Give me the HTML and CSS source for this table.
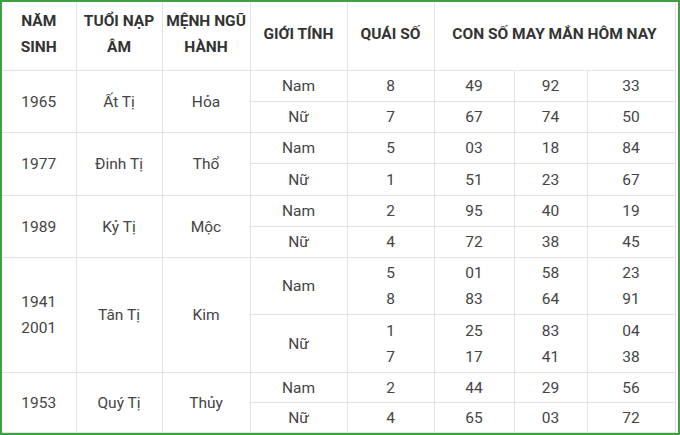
FILE: index.html
```html
<!DOCTYPE html>
<html lang="vi">
<head>
<meta charset="utf-8">
<title>Con số may mắn</title>
<link rel="stylesheet" href="styles.css">
</head>
<body>
<div class="frame">
<table class="lucky">
<colgroup>
<col class="c1"><col class="c2"><col class="c3"><col class="c4"><col class="c5"><col class="c6"><col class="c7"><col class="c8">
</colgroup>
<thead>
<tr class="head">
<th>NĂM<br>SINH</th>
<th>TUỔI NẠP<br>ÂM</th>
<th>MỆNH NGŨ<br>HÀNH</th>
<th>GIỚI TÍNH</th>
<th>QUÁI SỐ</th>
<th colspan="3">CON SỐ MAY MẮN HÔM NAY</th>
</tr>
</thead>
<tbody>
<tr class="r31"><td rowspan="2">1965</td><td rowspan="2">Ất Tị</td><td rowspan="2">Hỏa</td><td>Nam</td><td>8</td><td>49</td><td>92</td><td>33</td></tr>
<tr class="r31"><td>Nữ</td><td>7</td><td>67</td><td>74</td><td>50</td></tr>
<tr class="r31"><td rowspan="2">1977</td><td rowspan="2">Đinh Tị</td><td rowspan="2">Thổ</td><td>Nam</td><td>5</td><td>03</td><td>18</td><td>84</td></tr>
<tr class="r32"><td>Nữ</td><td>1</td><td>51</td><td>23</td><td>67</td></tr>
<tr class="r31"><td rowspan="2">1989</td><td rowspan="2">Kỷ Tị</td><td rowspan="2">Mộc</td><td>Nam</td><td>2</td><td>95</td><td>40</td><td>19</td></tr>
<tr class="r31"><td>Nữ</td><td>4</td><td>72</td><td>38</td><td>45</td></tr>
<tr class="r57"><td rowspan="2">1941<br>2001</td><td rowspan="2">Tân Tị</td><td rowspan="2">Kim</td><td>Nam</td><td>5<br>8</td><td>01<br>83</td><td>58<br>64</td><td>23<br>91</td></tr>
<tr class="r58"><td>Nữ</td><td>1<br>7</td><td>25<br>17</td><td>83<br>41</td><td>04<br>38</td></tr>
<tr class="r30"><td rowspan="2">1953</td><td rowspan="2">Quý Tị</td><td rowspan="2">Thủy</td><td>Nam</td><td>2</td><td>44</td><td>29</td><td>56</td></tr>
<tr class="r30"><td>Nữ</td><td>4</td><td>65</td><td>03</td><td>72</td></tr>
</tbody>
</table>
</div>
</body>
</html>
```

FILE: styles.css
```css
html, body {
  margin: 0;
  padding: 0;
  background: #ffffff;
}
.frame {
  width: 680px;
  height: 435px;
  box-sizing: border-box;
  border: 2px solid #3da23d;
  overflow: hidden;
  background: #fff;
}
.lucky {
  border-collapse: collapse;
  table-layout: fixed;
  width: 673px;
  font-family: Roboto, "Noto Sans", Arial, sans-serif;
  font-size: 15.5px;
  color: #444;
  margin-top: -1px;
}
.c1 { width: 74px; }
.c2 { width: 86px; }
.c3 { width: 88px; }
.c4 { width: 97px; }
.c5 { width: 87px; }
.c6 { width: 80px; }
.c7 { width: 73px; }
.c8 { width: 88px; }
.lucky th, .lucky td {
  border: 1px solid #e3e3e3;
  text-align: center;
  vertical-align: middle;
  padding: 0;
  line-height: 26px;
}
.lucky tr > :first-child { border-left: none; }
.lucky th {
  font-weight: bold;
  color: #333;
  padding-bottom: 5px;
}
.head { height: 69px; }
.r30 { height: 30px; }
.r31 { height: 31px; }
.r32 { height: 32px; }
.r57 { height: 57px; }
.r58 { height: 58px; }
```
